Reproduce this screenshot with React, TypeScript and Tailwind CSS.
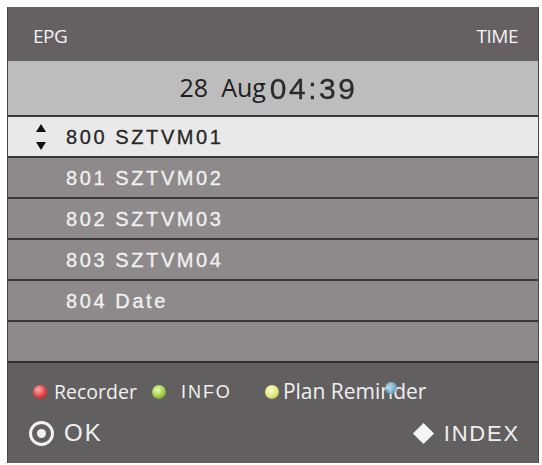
import React from "react";

const channels = [
  { no: "800", name: "SZTVM01", active: true },
  { no: "801", name: "SZTVM02" },
  { no: "802", name: "SZTVM03" },
  { no: "803", name: "SZTVM04" },
  { no: "804", name: "Date" },
  { no: "", name: "" },
];

function UpDown() {
  return (
    <svg width="12" height="30" viewBox="0 0 12 30" className="shrink-0">
      <path d="M6 2 L11 10 L1 10 Z" fill="#111" />
      <path d="M1 20 L11 20 L6 28 Z" fill="#111" />
    </svg>
  );
}

export default function App() {
  return (
    <div className="w-[542px] h-[465px] bg-white pt-[7px] pl-[7px]">
      <div className="w-[532px] h-[456px] flex flex-col bg-[#625f61] border-l border-r border-[#4a4748]">
        {/* title bar */}
        <div className="h-[54px] bg-[#656163] flex items-center justify-between pl-[25px] pr-[20px] pt-[5px] text-[#f2f2f2] text-[19px] tracking-[-0.5px] font-['Open_Sans',sans-serif]">
          <span>EPG</span>
          <span>TIME</span>
        </div>
        {/* date / clock */}
        <div className="h-[54px] bg-[#bdbdbd] flex items-center justify-center gap-[4px] pr-[9px] text-[#1e1e1e]">
          <span className="text-[25px] font-['Open_Sans',sans-serif]">28&nbsp; Aug</span>
          <span className="text-[30px] font-['Liberation_Sans',sans-serif] tracking-[2.5px] text-[#2a2a2a] [-webkit-text-stroke:0.3px_#2a2a2a] blur-[0.4px]">04:39</span>
        </div>
        {/* channel list */}
        <div className="flex flex-col border-b-[2px] border-[#2e2c2d]">
          {channels.map((c, i) => (
            <div
              key={i}
              className={
                "h-[41px] border-t-[2px] border-[#3a3839] flex items-center pt-[1px] font-['Liberation_Sans',sans-serif] text-[20px] tracking-[2.6px] " +
                (c.active
                  ? "bg-[#e9e9e9] text-[#262626] [-webkit-text-stroke:0.3px_#262626]"
                  : "bg-[#8e8a8b] text-[#f1f1f1] [-webkit-text-stroke:0.3px_#f1f1f1]")
              }
            >
              <div className="w-[58px] flex justify-center pl-[8px]">{c.active ? <UpDown /> : null}</div>
              <span>{c.no}{c.no ? " " : ""}{c.name}</span>
            </div>
          ))}
        </div>
        {/* key legend */}
        <div className="flex-1 flex flex-col pl-[25px] pr-[18px] pt-[15px] text-[#f0f0f0]">
          <div className="h-[28px] flex items-center text-[19.5px] font-['Open_Sans',sans-serif]">
            <span className="w-[14px] h-[14px] rounded-full bg-[radial-gradient(circle_at_40%_35%,#ffb0b0,#e0403f_55%,#8a1c1c)]" />
            <span className="ml-[7px]">Recorder</span>
            <span className="ml-[15px] w-[14px] h-[14px] rounded-full bg-[radial-gradient(circle_at_40%_35%,#e6ffb0,#9ccc45_55%,#4d6b1a)]" />
            <span className="ml-[15px] font-['Liberation_Sans',sans-serif] text-[18px] tracking-[2px]">INFO</span>
            <span className="ml-[33px] w-[14px] h-[14px] rounded-full bg-[radial-gradient(circle_at_40%_35%,#ffffd0,#e3e67a_55%,#8a8a30)]" />
            <span className="relative ml-[4px] text-[21px]">
              Plan Reminder
              <span className="absolute left-[102px] top-[6px] w-[12px] h-[12px] rounded-full bg-[radial-gradient(circle_at_40%_35%,#c8f0ff,#6fb6d6_60%,#3a7690)] opacity-80" />
            </span>
          </div>
          <div className="mt-[11px] h-[32px] flex items-center justify-between">
            <div className="flex items-center">
              <span className="ml-[-4px] w-[25px] h-[25px] rounded-full border-[3px] border-[#f2f2f2] flex items-center justify-center">
                <span className="w-[9px] h-[9px] rounded-full bg-[#f2f2f2]" />
              </span>
              <span className="ml-[10px] text-[24px] font-['Liberation_Sans',sans-serif] tracking-[2px]">OK</span>
            </div>
            <div className="flex items-center">
              <span className="w-[15px] h-[15px] bg-[#f4f4f4] rotate-45" />
              <span className="ml-[13px] text-[22px] font-['Liberation_Sans',sans-serif] tracking-[1.8px]">INDEX</span>
            </div>
          </div>
        </div>
      </div>
    </div>
  );
}
